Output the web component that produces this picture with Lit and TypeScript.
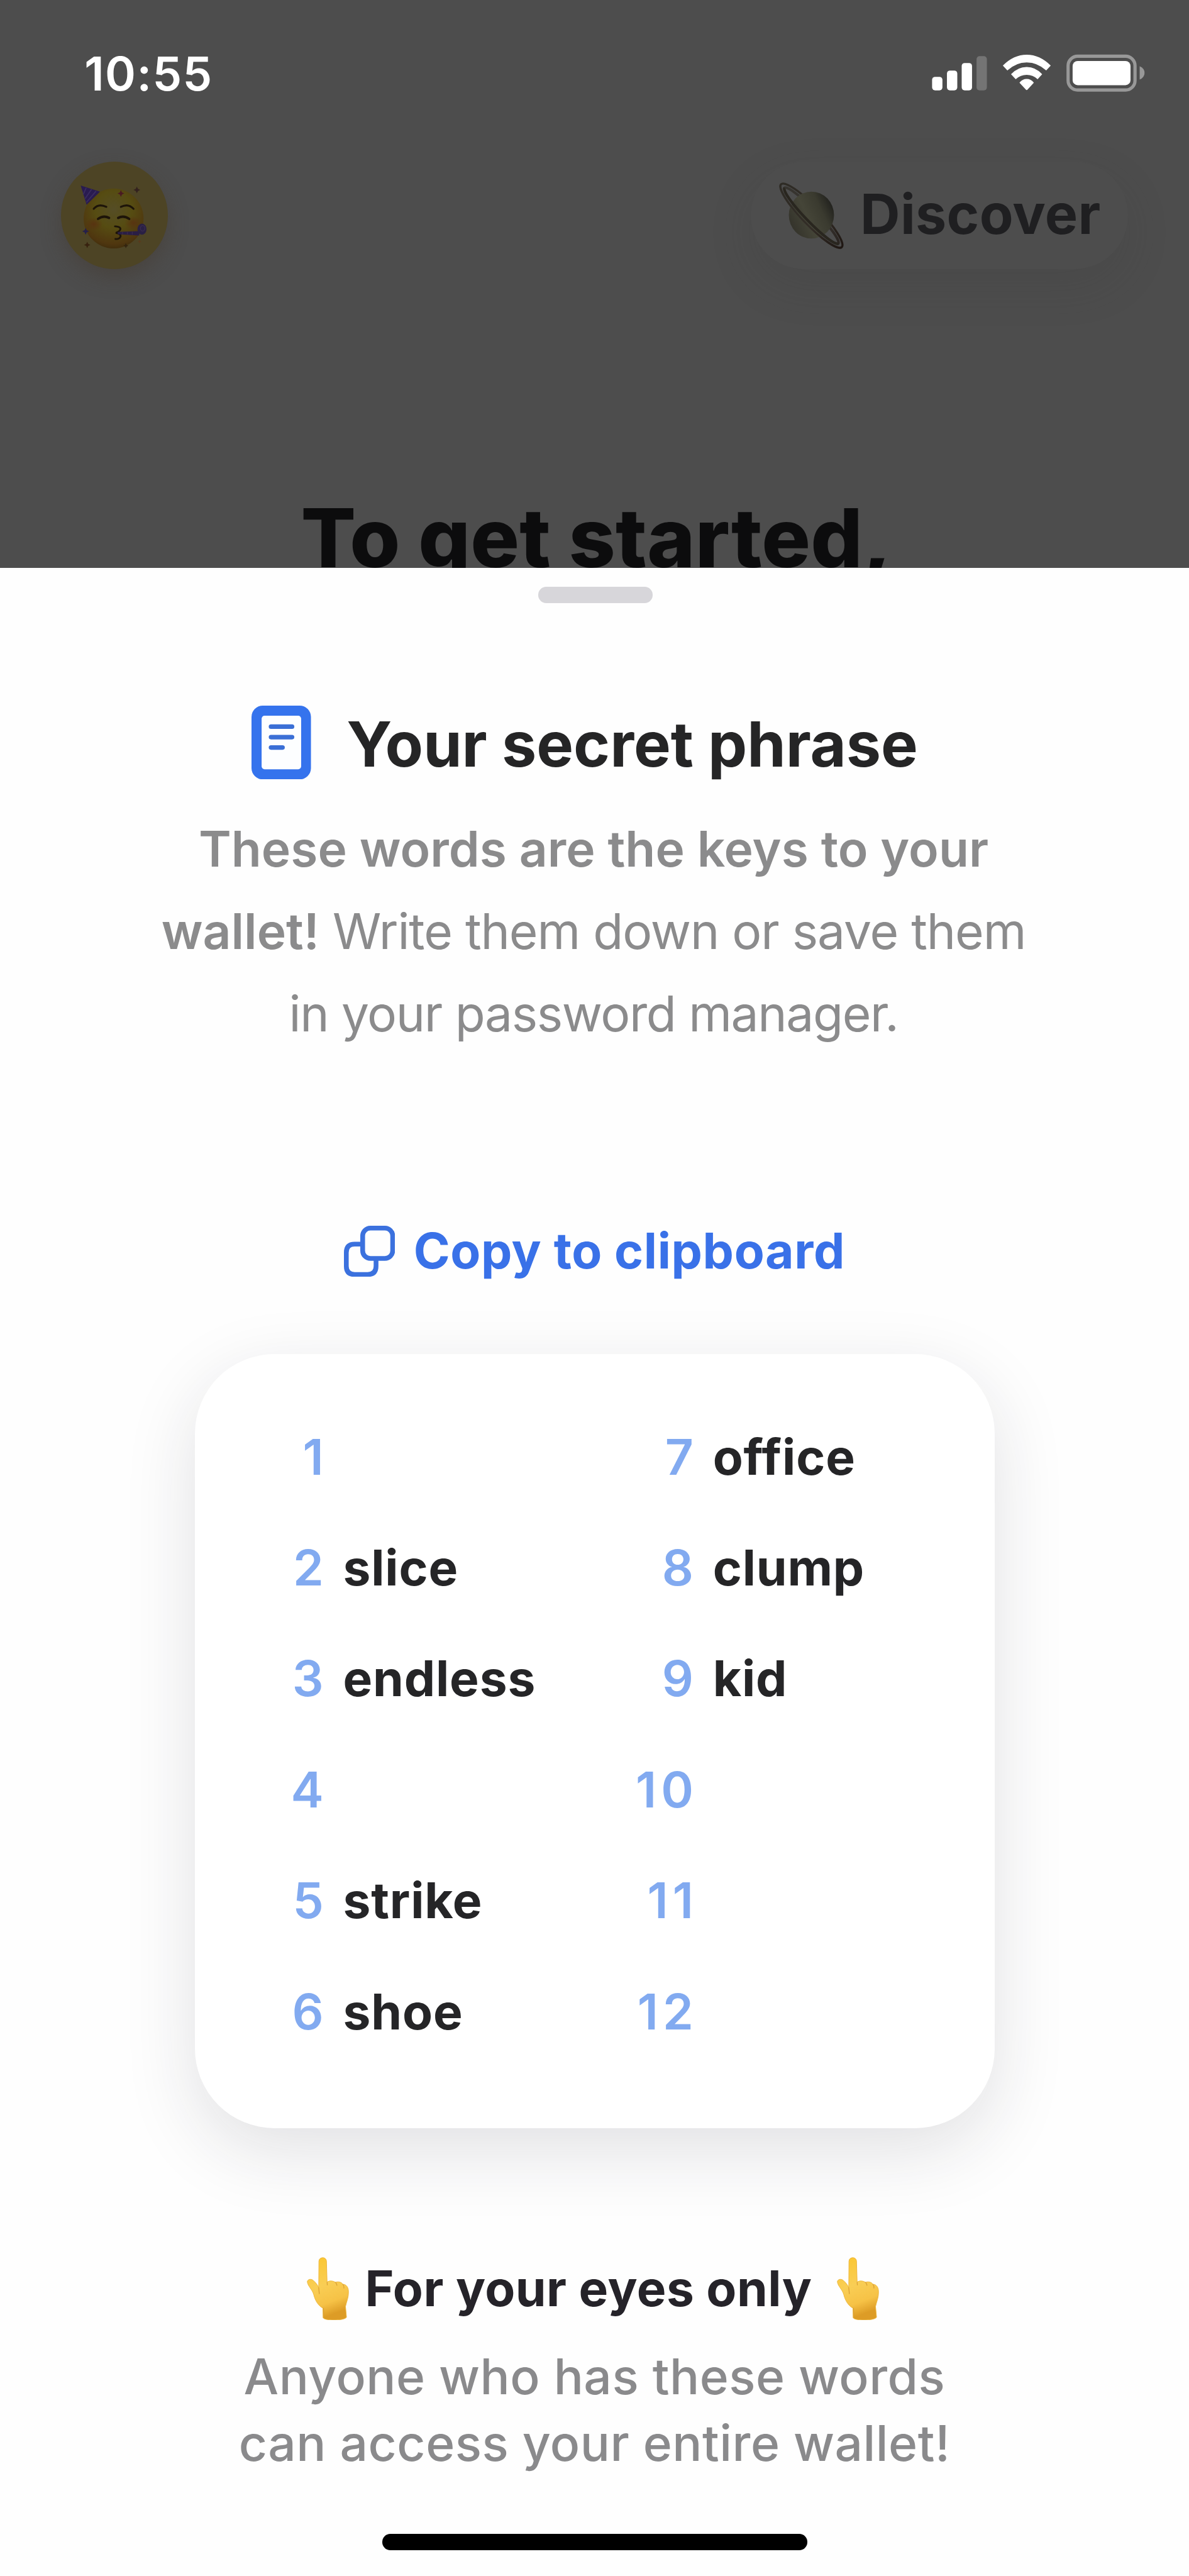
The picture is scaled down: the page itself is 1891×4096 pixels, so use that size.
import { LitElement, html, svg, css, unsafeCSS } from "lit";

/* The screen is designed on a 2000-unit grid; u() turns design units into pixels. */
const SCALE = 0.9456;
const u = (n: number) => unsafeCSS(`${(n * SCALE).toFixed(2)}px`);

const leftWords = ["", "slice", "endless", "", "strike", "shoe"];
const rightWords = ["office", "clump", "kid", "", "", ""];

class StatusBar extends LitElement {
  static styles = css`
    :host {
      display: flex;
      align-items: center;
      justify-content: space-between;
      height: ${u(247)};
      padding: 0 ${u(70)} 0 ${u(142)};
      color: #fff;
    }
    .time {
      font-weight: 600;
      font-size: ${u(78.5)};
      letter-spacing: 0.019em;
    }
    .icons {
      display: block;
      width: ${u(370)};
      height: ${u(75)};
    }
  `;
  render() {
    return html`
      <span class="time">10:55</span>
      <svg class="icons" viewBox="1560 86 370 75" fill="#fff">
        <rect x="1567.8" y="129.5" width="17.4" height="22.8" rx="5" />
        <rect x="1592.8" y="119" width="17.4" height="33.3" rx="5" />
        <rect x="1617.6" y="106.3" width="17.4" height="46" rx="5" />
        <rect x="1642.6" y="94.8" width="17.4" height="57.5" rx="5" fill="#747474" />
        <path
          d="M1686.8 110.6 Q1705 92.3 1727 92.3 T1767.4 110.6 L1759.8 118.8 Q1745 105.2 1727 105.2 T1694.4 118.8 Z"
        />
        <path
          d="M1700.6 125.2 Q1712 113 1727 113 T1753 125.2 L1745.3 133.6 Q1737.5 126.2 1727 126.2 T1708.5 133.6 Z"
        />
        <path d="M1714.8 139.4 Q1720 133.2 1727 133.2 T1739 139.4 L1728.3 151 Q1727 152.6 1725.6 151 Z" />
        <rect x="1796.6" y="94.9" width="112.6" height="56.8" rx="16" fill="none" stroke="#989898" stroke-width="5.4" />
        <rect x="1804.2" y="102.8" width="97.4" height="40.8" rx="8.5" />
        <path d="M1917 111.7 Q1925.2 115.4 1925.2 123 T1917 134.2 Z" fill="#989898" />
      </svg>
    `;
  }
}
customElements.define("status-bar", StatusBar);

const star = (x: number, y: number, r: number, fill: string) => svg`
  <path transform="translate(${x} ${y}) scale(${r})" fill=${fill}
    d="M0 -1 L.32 -.32 L1 0 L.32 .32 L0 1 L-.32 .32 L-1 0 L-.32 -.32 Z" />`;

class WalletHome extends LitElement {
  static styles = css`
    :host {
      display: block;
      height: ${u(955)};
      overflow: hidden;
      background: #4d4d4d;
    }
    .nav {
      display: flex;
      align-items: center;
      justify-content: space-between;
      height: ${u(181)};
      margin: ${u(25)} ${u(103)} 0 ${u(102.7)};
    }
    .avatar {
      width: ${u(180)};
      height: ${u(181)};
      border-radius: 50%;
      background: #4d4425;
      box-shadow: 0 ${u(14)} ${u(34)} rgba(66, 56, 44, 0.45);
    }
    .avatar svg {
      display: block;
      width: 100%;
      height: 100%;
    }
    .discover {
      box-sizing: border-box;
      display: flex;
      align-items: center;
      width: ${u(634)};
      height: ${u(181)};
      padding-left: ${u(46)};
      border-radius: ${u(90)};
      background: #4d4d4d;
      box-shadow: 0 ${u(28)} ${u(70)} rgba(60, 60, 62, 0.2);
      color: #1f1f21;
      font-weight: 700;
      font-size: ${u(93)};
      letter-spacing: 0.0035em;
    }
    .discover svg {
      width: ${u(112)};
      height: ${u(112)};
      margin-right: ${u(26)};
      flex: none;
    }
    .discover span {
      padding-bottom: ${u(5)};
    }
    .hero {
      margin: ${u(375.7)} 0 0;
      padding-left: ${u(6)};
      text-align: center;
      color: #0c0c0d;
      font-weight: 800;
      font-size: ${u(137)};
      line-height: ${u(150)};
      letter-spacing: 0.0015em;
      white-space: nowrap;
    }
  `;
  render() {
    return html`
      <status-bar></status-bar>
      <div class="nav">
        <div class="avatar">
          <svg viewBox="128 697 543 543">
            <defs>
              <radialGradient id="face" cx="0.5" cy="0.35" r="0.68">
                <stop offset="0" stop-color="#554d26" />
                <stop offset="0.45" stop-color="#564c12" />
                <stop offset="0.85" stop-color="#4f360f" />
                <stop offset="1" stop-color="#3d2c0c" />
              </radialGradient>
              <radialGradient id="cheek">
                <stop offset="0" stop-color="#5a2c10" stop-opacity="0.7" />
                <stop offset="1" stop-color="#5a2c10" stop-opacity="0" />
              </radialGradient>
            </defs>
            <circle cx="395" cy="984" r="152" fill="url(#face)" />
            <ellipse cx="296" cy="1012" rx="44" ry="34" fill="url(#cheek)" />
            <ellipse cx="494" cy="1006" rx="44" ry="34" fill="url(#cheek)" />
            <path d="M228 817 L326 848 L258 914 Z" fill="#291b50" />
            <path d="M256 828 L241 862 M283 836 L250 884 M306 845 L257 902" stroke="#3a2c60" stroke-width="6" />
            <g fill="none" stroke="#1d1409" stroke-width="10" stroke-linecap="round">
              <path d="M294 935 Q318 906 358 925" />
              <path d="M432 925 Q470 906 496 935" />
              <path d="M316 986 Q344 966 372 981" stroke-width="12" />
              <path d="M418 981 Q446 966 474 986" stroke-width="12" />
              <path d="M402 1024 Q436 1026 428 1042 Q422 1052 406 1057 Q434 1062 430 1076 Q424 1090 404 1088" stroke-width="9" />
            </g>
            <path d="M416 1052 L525 1048 L525 1070 L416 1064 Z" fill="#2a1e44" />
            <path d="M440 1053 v11 M465 1052 v13 M490 1051 v15" stroke="#3a2a4c" stroke-width="5" />
            <ellipse cx="539" cy="1038" rx="23" ry="28" fill="#2a2044" />
            <ellipse cx="542" cy="1034" rx="11" ry="14" fill="none" stroke="#3b2c50" stroke-width="4" />
            ${star(432, 857, 17, "#4a1a22")} ${star(513, 839, 17, "#33211f")} ${star(253, 1049, 17, "#26204a")}
            ${star(261, 1118, 16, "#38220f")} ${star(457, 1122, 13, "#33240f")} ${star(527, 1101, 9, "#5c3a1c")}
          </svg>
        </div>
        <div class="discover">
          <svg viewBox="0 0 112 112">
            <defs>
              <linearGradient id="planet" x1="0" y1="0.7" x2="1" y2="0.2">
                <stop offset="0" stop-color="#33322a" />
                <stop offset="0.4" stop-color="#454538" />
                <stop offset="0.7" stop-color="#3a3a2f" />
                <stop offset="1" stop-color="#1c1c1a" />
              </linearGradient>
              <linearGradient id="ring" x1="0" y1="0" x2="1" y2="0">
                <stop offset="0" stop-color="#2e2b25" />
                <stop offset="0.6" stop-color="#332d27" />
                <stop offset="1" stop-color="#1f1713" />
              </linearGradient>
            </defs>
            <g transform="rotate(46 55.5 56)" fill="none" stroke="url(#ring)">
              <ellipse cx="55.5" cy="56" rx="73.500" ry="15.500" stroke-width="3.6" />
              <ellipse cx="55.5" cy="56" rx="65" ry="10" stroke-width="4.4" stroke-opacity="0.75" />
            </g>
            <ellipse cx="55.5" cy="55" rx="38" ry="39.5" fill="url(#planet)" />
            <g transform="rotate(46 55.5 56)" fill="none">
              <path d="M-18 56 A73.500 15.500 0 0 0 129 56" stroke="url(#ring)" stroke-width="3.2" />
              <path d="M-9.500 56 A65 10 0 0 0 120.500 56" stroke="#29261f" stroke-width="4.4" />
            </g>
          </svg>
          <span>Discover</span>
        </div>
      </div>
      <h1 class="hero">To get started,</h1>
    `;
  }
}
customElements.define("wallet-home", WalletHome);

class PhraseCard extends LitElement {
  static styles = css`
    :host {
      box-sizing: border-box;
      display: flex;
      width: ${u(1346)};
      height: ${u(1302)};
      padding-top: ${u(80.2)};
      border-radius: ${u(134)};
      background: #fff;
      box-shadow: 0 ${u(38)} ${u(120)} rgba(30, 30, 46, 0.13);
    }
    .column {
      width: ${u(622)};
    }
    .row {
      display: grid;
      grid-template-columns: ${u(217)} 1fr;
      column-gap: ${u(32.5)};
      align-items: center;
      height: ${u(186.6)};
      font-size: ${u(83)};
      line-height: ${u(100)};
    }
    .number {
      margin-right: -0.09em;
      text-align: right;
      color: #82aaf0;
      font-weight: 560;
      letter-spacing: 0.09em;
    }
    .word {
      color: #252527;
      font-weight: 700;
      letter-spacing: 0.0105em;
    }
  `;
  private column(words: string[], first: number) {
    return html`<div class="column">
      ${words.map(
        (word, i) => html`<div class="row">
          <span class="number">${first + i}</span><span class="word">${word}</span>
        </div>`
      )}
    </div>`;
  }
  render() {
    return html`${this.column(leftWords, 1)}${this.column(rightWords, 7)}`;
  }
}
customElements.define("phrase-card", PhraseCard);

class SecretSheet extends LitElement {
  static styles = css`
    :host {
      box-sizing: border-box;
      display: flex;
      flex-direction: column;
      align-items: center;
      flex: 1;
      background: #fefefe;
      white-space: nowrap;
    }
    .handle {
      width: ${u(192)};
      height: ${u(27)};
      margin-top: ${u(32)};
      margin-right: ${u(-3)};
      border-radius: ${u(13.5)};
      background: #d7d6da;
    }
    .title {
      display: flex;
      align-items: center;
      align-self: stretch;
      gap: ${u(60)};
      height: ${u(124)};
      margin: ${u(172.7)} 0 0;
      padding-left: ${u(423)};
      color: #252526;
      font-weight: 700;
      font-size: ${u(104.5)};
      letter-spacing: -0.0008em;
    }
    .title span {
      padding-top: ${u(4)};
    }
    .title svg {
      width: ${u(100)};
      height: ${u(124)};
    }
    .intro {
      margin: ${u(46.7)} 0 0;
      padding-right: ${u(3)};
      text-align: center;
      color: #8b8b8c;
      font-weight: 420;
      font-size: ${u(83)};
      line-height: ${u(138.7)};
    }
    .intro strong {
      font-weight: 620;
      letter-spacing: 0.0005em;
    }
    .snug {
      letter-spacing: -0.0135em;
    }
    .snugger {
      letter-spacing: -0.0175em;
    }
    .copy {
      display: flex;
      align-items: center;
      align-self: stretch;
      height: ${u(86)};
      margin-top: ${u(287.2)};
      padding-left: ${u(578)};
      gap: ${u(31.5)};
      color: #3971e8;
      font-weight: 700;
      font-size: ${u(83)};
      letter-spacing: 0.0075em;
    }
    .copy svg {
      width: ${u(86)};
      height: ${u(86)};
    }
    .copy span {
      padding-bottom: ${u(2)};
    }
    phrase-card {
      margin-top: ${u(130)};
      margin-right: ${u(-1)};
    }
    .warning {
      display: flex;
      align-items: center;
      align-self: stretch;
      height: ${u(106)};
      margin-top: ${u(216.5)};
      padding-left: ${u(516)};
      color: #252329;
      font-weight: 700;
      font-size: ${u(83)};
      letter-spacing: 0.006em;
    }
    .warning svg {
      width: ${u(71)};
      height: ${u(106)};
    }
    .warning span {
      width: ${u(794)};
      margin-left: ${u(27)};
    }
    .note {
      margin: ${u(38.8)} 0 0;
      text-align: center;
      color: #8a8a8c;
      font-weight: 520;
      font-size: ${u(83)};
      line-height: ${u(112.3)};
      letter-spacing: 0.0065em;
    }
    .home {
      width: ${u(715)};
      height: ${u(27)};
      margin-top: ${u(96.4)};
      margin-right: ${u(-2)};
      border-radius: ${u(13.5)};
      background: #000;
    }
  `;
  private finger() {
    return html`<svg viewBox="48 43 210.500 315">
      <defs>
        <linearGradient id="skin" x1="0" y1="0" x2="0.25" y2="1">
          <stop offset="0" stop-color="#fbc62e" />
          <stop offset="0.5" stop-color="#f9ce55" />
          <stop offset="0.8" stop-color="#f6c246" />
          <stop offset="1" stop-color="#dd9c26" />
        </linearGradient>
      </defs>
      <path
        d="M107 196 L108 63 C109 40 145 40 146 63 L149 168 C162 158 182 162 190 169 C205 163 222 168 228 179 C245 178 256 195 256 215 C257 245 246 265 241 290 L246 343 C238 361 138 362 129 346 L128 298 C105 285 90 262 82 230 C75 204 52 188 50 165 C54 150 72 152 81 160 C93 171 103 184 107 196 Z"
        fill="url(#skin)"
        stroke="#edb53a"
        stroke-width="3"
      />
      <path
        d="M107 196 L110 226 M149 168 L150 182 M190 169 Q197 174 198 184 M228 179 Q234 186 233 198 M131 298 L133 344"
        fill="none"
        stroke="#dba034"
        stroke-width="4"
        stroke-linecap="round"
      />
    </svg>`;
  }
  render() {
    return html`
      <div class="handle"></div>
      <h2 class="title">
        <svg viewBox="0 0 100 124">
          <rect width="100" height="124" rx="19" fill="#3573ed" />
          <rect x="17" y="17" width="66.5" height="90" rx="5" fill="#fdfeff" />
          <g fill="#3b6fd6">
            <rect x="29" y="31.500" width="43" height="7.6" rx="3.8" />
            <rect x="29" y="49.200" width="43" height="7.6" rx="3.8" />
            <rect x="29" y="66.600" width="27" height="7.6" rx="3.8" />
          </g>
        </svg>
        <span>Your secret phrase</span>
      </h2>
      <p class="intro">
        <strong>These words are the keys to your</strong><br />
        <strong>wallet!</strong><span class="snug"> Write them down or save them</span><br />
        <span class="snugger">in your password manager.</span>
      </p>
      <div class="copy">
        <svg viewBox="0 0 86 86" fill="none" stroke="#3b71de" stroke-width="8">
          <path d="M31 31 H18 Q4 31 4 45 V68 Q4 82 18 82 H40 Q54 82 54 68 V55" />
          <rect x="31.500" y="4" width="50.500" height="51" rx="13" />
        </svg>
        <span>Copy to clipboard</span>
      </div>
      <phrase-card></phrase-card>
      <div class="warning">${this.finger()}<span>For your eyes only</span>${this.finger()}</div>
      <p class="note">Anyone who has these words<br />can access your entire wallet!</p>
      <div class="home"></div>
    `;
  }
}
customElements.define("secret-sheet", SecretSheet);

class AppRoot extends LitElement {
  static styles = css`
    :host {
      display: flex;
      flex-direction: column;
      width: 100%;
      height: 4096px;
      overflow: hidden;
      background: #fefefe;
      font-family: Inter, "Liberation Sans", sans-serif;
    }
  `;
  render() {
    return html`<wallet-home></wallet-home><secret-sheet></secret-sheet>`;
  }
}
customElements.define("app-root", AppRoot);
